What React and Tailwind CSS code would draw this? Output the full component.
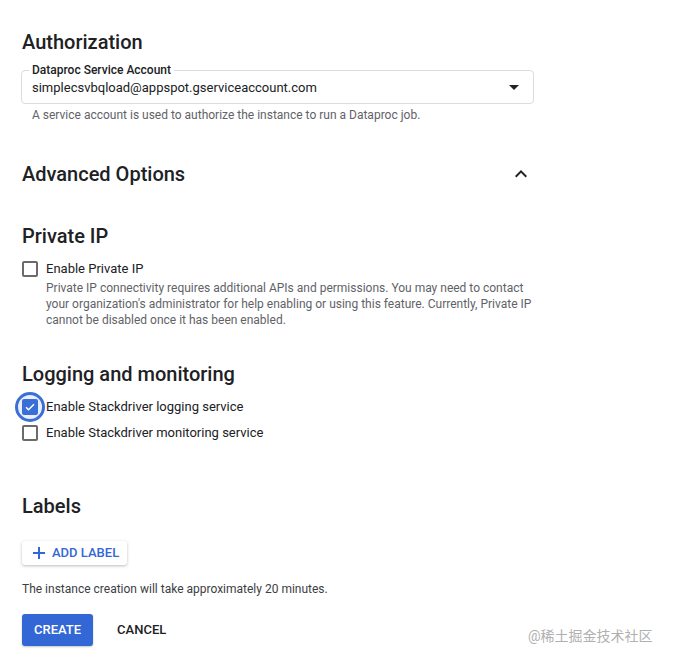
import React, { useState } from 'react';

const font = { fontFamily: 'Roboto, "Noto Sans CJK SC", sans-serif' };

function Checkbox({ checked, focused, label, onChange }) {
    return (
        <label className="flex items-center gap-[8px] cursor-pointer">
            <span className="relative flex w-[16px] h-[16px] items-center justify-center">
                {focused && (
                    <span className="absolute left-[-7px] top-[-7px] w-[30px] h-[30px] rounded-full border-[3px] border-[#3b6fd8] bg-[#e8effb]" />
                )}
                <span
                    onClick={onChange}
                    className={
                        checked
                            ? 'relative flex w-[16px] h-[16px] items-center justify-center rounded-[2px] bg-[#3b6fd8]'
                            : 'relative flex w-[16px] h-[16px] rounded-[2px] border-2 border-[#6b6b6b] bg-white'
                    }
                >
                    {checked && (
                        <svg width="12" height="12" viewBox="0 0 24 24" fill="none" stroke="white" strokeWidth="3">
                            <path d="M4 12.5l5 5L20 6.5" />
                        </svg>
                    )}
                </span>
            </span>
            <span className="text-[13px] leading-[16px] text-[#202124]">{label}</span>
        </label>
    );
}

export default function App() {
    const [privateIp, setPrivateIp] = useState(false);
    const [logging, setLogging] = useState(true);
    const [monitoring, setMonitoring] = useState(false);

    return (
        <div className="w-[673px] h-[663px] bg-white relative overflow-hidden" style={font}>
            <div className="flex flex-col pl-[22px] pt-[30px] w-[534px]">
                <h2 className="text-[20px] leading-[24px] font-medium text-[#202124]">Authorization</h2>

                <div className="relative mt-[16px] ml-[-1px] h-[34px] rounded-[4px] border border-[#dadce0] flex items-center justify-between pl-[10px] pr-[14px]">
                    <span className="absolute left-[7px] top-[-9px] bg-white px-[3px] text-[12px] leading-[16px] font-medium text-[#202124]">
                        Dataproc Service Account
                    </span>
                    <span className="text-[13px] leading-[16px] text-[#202124] mt-[1px]">simplecsvbqload@appspot.gserviceaccount.com</span>
                    <svg width="10" height="5" viewBox="0 0 10 5" className="mt-[1px]">
                        <path d="M0 0h10L5 5z" fill="#202124" />
                    </svg>
                </div>
                <p className="mt-[3px] pl-[10px] text-[12px] leading-[16px] text-[#5f6368]">
                    A service account is used to authorize the instance to run a Dataproc job.
                </p>

                <div className="mt-[39px] flex items-center justify-between">
                    <h2 className="text-[20px] leading-[24px] font-medium text-[#202124]">Advanced Options</h2>
                    <svg width="24" height="24" viewBox="0 0 24 24" className="mr-[1px]">
                        <path d="M12 8l-6 6 1.41 1.41L12 10.83l4.59 4.58L18 14z" fill="#202124" />
                    </svg>
                </div>

                <h2 className="mt-[38px] text-[20px] leading-[24px] font-medium text-[#202124]">Private IP</h2>
                <div className="mt-[13px]">
                    <Checkbox checked={privateIp} label="Enable Private IP" onChange={() => setPrivateIp(!privateIp)} />
                </div>
                <p className="mt-[3px] pl-[24px] text-[12px] leading-[16px] text-[#5f6368]">
                    Private IP connectivity requires additional APIs and permissions. You may need to contact your organization's administrator for help enabling or using this feature. Currently, Private IP cannot be disabled once it has been enabled.
                </p>

                <h2 className="mt-[34px] text-[20px] leading-[24px] font-medium text-[#202124]">Logging and monitoring</h2>
                <div className="mt-[13px] flex flex-col gap-[10px]">
                    <Checkbox checked={logging} focused label="Enable Stackdriver logging service" onChange={() => setLogging(!logging)} />
                    <Checkbox checked={monitoring} label="Enable Stackdriver monitoring service" onChange={() => setMonitoring(!monitoring)} />
                </div>

                <h2 className="mt-[53px] text-[20px] leading-[24px] font-medium text-[#202124]">Labels</h2>
                <div className="mt-[23px]">
                    <button className="flex items-center gap-[7px] h-[24px] pl-[11px] pr-[8px] rounded-[3px] bg-white shadow-[0_1px_3px_rgba(60,64,67,0.35)] text-[13px] font-medium text-[#3367d6]">
                        <svg width="12" height="12" viewBox="0 0 12 12">
                            <path d="M5 0h2v5h5v2H7v5H5V7H0V5h5z" fill="#3367d6" />
                        </svg>
                        ADD LABEL
                    </button>
                </div>
                <p className="mt-[16px] text-[12px] leading-[16px] text-[#3c4043]">
                    The instance creation will take approximately 20 minutes.
                </p>

                <div className="mt-[17px] flex items-center gap-[24px]">
                    <button className="h-[32px] px-[12px] rounded-[3px] bg-[#3367d6] text-white text-[13px] font-medium shadow-[0_1px_2px_rgba(60,64,67,0.3)]">
                        CREATE
                    </button>
                    <button className="h-[32px] text-[13px] font-medium text-[#202124]">CANCEL</button>
                </div>
            </div>

            <span className="absolute left-[528px] top-[626px] text-[14px] leading-[20px] text-[#b0b0b0]">@稀土掘金技术社区</span>
        </div>
    );
}
